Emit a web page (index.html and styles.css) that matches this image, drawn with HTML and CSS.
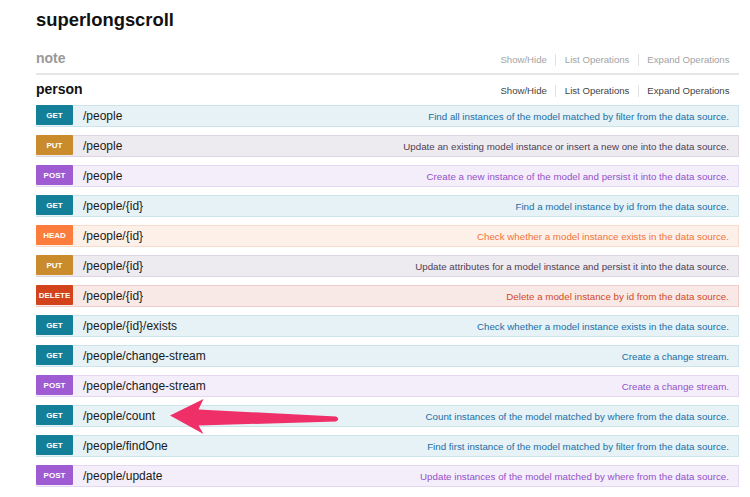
FILE: index.html
```html
<!DOCTYPE html>
<html lang="en">
<head>
<meta charset="utf-8">
<title>superlongscroll</title>
<link rel="stylesheet" href="styles.css">
</head>
<body>
<div class="page">
  <h1 class="title">superlongscroll</h1>

  <section class="resource resource--note">
    <div class="res-head">
      <h2 class="res-name">note</h2>
      <ul class="res-links">
        <li>Show/Hide</li>
        <li>List Operations</li>
        <li>Expand Operations</li>
      </ul>
    </div>
  </section>

  <section class="resource resource--person">
    <div class="res-head">
      <h2 class="res-name">person</h2>
      <ul class="res-links">
        <li>Show/Hide</li>
        <li>List Operations</li>
        <li>Expand Operations</li>
      </ul>
    </div>
    <ul class="ops">
      <li class="op op--get"><span class="method">GET</span><span class="path">/people</span><span class="desc">Find all instances of the model matched by filter from the data source.</span></li>
      <li class="op op--put"><span class="method">PUT</span><span class="path">/people</span><span class="desc">Update an existing model instance or insert a new one into the data source.</span></li>
      <li class="op op--post"><span class="method">POST</span><span class="path">/people</span><span class="desc">Create a new instance of the model and persist it into the data source.</span></li>
      <li class="op op--get"><span class="method">GET</span><span class="path">/people/{id}</span><span class="desc">Find a model instance by id from the data source.</span></li>
      <li class="op op--head"><span class="method">HEAD</span><span class="path">/people/{id}</span><span class="desc">Check whether a model instance exists in the data source.</span></li>
      <li class="op op--put"><span class="method">PUT</span><span class="path">/people/{id}</span><span class="desc">Update attributes for a model instance and persist it into the data source.</span></li>
      <li class="op op--delete"><span class="method">DELETE</span><span class="path">/people/{id}</span><span class="desc">Delete a model instance by id from the data source.</span></li>
      <li class="op op--get"><span class="method">GET</span><span class="path">/people/{id}/exists</span><span class="desc">Check whether a model instance exists in the data source.</span></li>
      <li class="op op--get"><span class="method">GET</span><span class="path">/people/change-stream</span><span class="desc">Create a change stream.</span></li>
      <li class="op op--post"><span class="method">POST</span><span class="path">/people/change-stream</span><span class="desc">Create a change stream.</span></li>
      <li class="op op--get"><span class="method">GET</span><span class="path">/people/count</span><span class="desc">Count instances of the model matched by where from the data source.</span></li>
      <li class="op op--get"><span class="method">GET</span><span class="path">/people/findOne</span><span class="desc">Find first instance of the model matched by filter from the data source.</span></li>
      <li class="op op--post"><span class="method">POST</span><span class="path">/people/update</span><span class="desc">Update instances of the model matched by where from the data source.</span></li>
    </ul>
  </section>
</div>

<svg class="annotation" width="750" height="497" viewBox="0 0 750 497" aria-hidden="true">
  <path d="M170 415.5 L203.5 399 L198.5 409.5 L336 416.5 Q340.5 419 336 421.5 L198.5 425.5 L203.5 434 Z" fill="#ee2f68"/>
</svg>
</body>
</html>
```

FILE: styles.css
```css
html, body {
  margin: 0;
  padding: 0;
  background: #ffffff;
}

body {
  font-family: "Liberation Sans", Arial, Helvetica, sans-serif;
  color: #222222;
  position: relative;
  width: 750px;
  height: 497px;
  overflow: hidden;
}

.page {
  padding: 9px 11px 0 36px;
}

.title {
  margin: 0;
  font-size: 18.4px;
  line-height: 22px;
  font-weight: bold;
  color: #111111;
}

.resource {
  display: flex;
  flex-direction: column;
}

.res-head {
  display: flex;
  align-items: baseline;
  justify-content: space-between;
}

.resource--note {
  margin-top: 17px;
}

.resource--note .res-head {
  padding-bottom: 5px;
  border-bottom: 2px solid #e6e6e6;
}

.resource--person {
  margin-top: 4px;
}

.res-name {
  margin: 0;
  font-size: 14px;
  line-height: 20px;
  font-weight: bold;
}

.resource--note .res-name {
  color: #999999;
}

.resource--person .res-name {
  color: #111111;
}

.res-links {
  list-style: none;
  margin: 0;
  padding: 0;
  display: flex;
  align-items: center;
  font-size: 9.6px;
}

.res-links li {
  padding: 0 8.5px;
  line-height: 12px;
}

.res-links li:last-child {
  padding-right: 9.5px;
}

.res-links li + li {
  border-left: 1px solid #e2e2e2;
}

.resource--note .res-links li {
  color: #a3a3a3;
}

.resource--person .res-links li {
  color: #444444;
}

.ops {
  list-style: none;
  margin: 6px 0 0 0;
  padding: 0;
  display: flex;
  flex-direction: column;
  gap: 8px;
}

.op {
  display: flex;
  align-items: center;
  height: 22px;
  box-sizing: border-box;
  border: 1px solid;
  border-left: none;
}

.method {
  flex: none;
  align-self: flex-start;
  width: 37px;
  height: 20px;
  margin-top: -1px;
  box-sizing: border-box;
  display: flex;
  align-items: center;
  justify-content: center;
  color: #ffffff;
  font-size: 8px;
  font-weight: bold;
  border-radius: 1px;
}

.path {
  margin-left: 10px;
  font-size: 12px;
  color: #1a1a1a;
}

.desc {
  margin-left: auto;
  padding-right: 9px;
  font-size: 9.75px;
}

.op--get { background: #e6f2f6; border-color: #cce4eb; }
.op--get .method { background: #137f99; }
.op--get .desc { color: #1b6ea6; }

.op--put { background: #eeebf0; border-color: #ddd6e0; }
.op--put .method { background: #c98b2b; }
.op--put .desc { color: #4f3e55; }

.op--post { background: #f4eefb; border-color: #e4d8f3; }
.op--post .method { background: #9f5cd2; }
.op--post .desc { color: #9351c8; }

.op--head { background: #fdf0e8; border-color: #f8dccb; }
.op--head .method { background: #fb7c3c; }
.op--head .desc { color: #f0753a; }

.op--delete { background: #f9e9e6; border-color: #efcdc6; }
.op--delete .method { background: #d2431c; }
.op--delete .desc { color: #d04a26; }

.annotation {
  position: absolute;
  left: 0;
  top: 0;
  pointer-events: none;
}
```
